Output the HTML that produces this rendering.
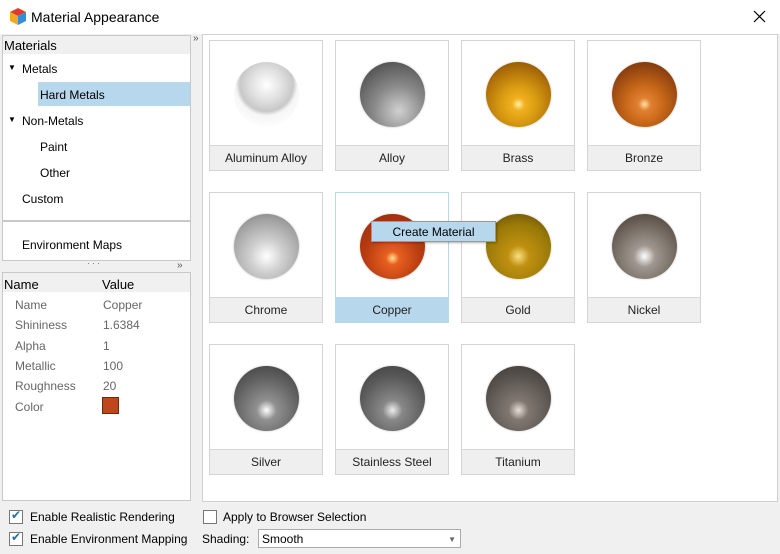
<!DOCTYPE html>
<html><head><style>
*{box-sizing:border-box;margin:0;padding:0}
body{width:780px;height:554px;background:#f0f0f0;font-family:"Liberation Sans",sans-serif;font-size:12px;color:#000;position:relative;overflow:hidden}
.a{position:absolute}
.title{left:0;top:0;width:780px;height:34px;background:#fff;}
.tile{position:absolute;width:114px;height:131px;border:1px solid #d4d4d4;background:#fff}
.tile .lbl{position:absolute;left:0;right:0;bottom:0;height:25px;background:#efefef;border-top:1px solid #d8d8d8;text-align:center;line-height:25px;font-size:12px;color:#222}
.tile .sp{position:absolute;left:24px;top:21px;width:65px;height:65px;border-radius:50%;box-shadow:0 0 2px rgba(0,0,0,.25)}
.prop{position:absolute;left:15px;color:#666;font-size:12px}
.val{position:absolute;left:103px;color:#666;font-size:12px}
.cb{position:absolute;width:14px;height:14px;border:1px solid #777;background:#fff}
</style></head><body>
<div class="a title">
 <svg class="a" style="left:9px;top:7px" width="18" height="19" viewBox="0 0 18 19">
  <path d="M9 1 L17 5 L9 9 L1 5Z" fill="#e03a2e"/>
  <path d="M1 5 L9 9 L9 18 L1 14Z" fill="#f5a623"/>
  <path d="M17 5 L9 9 L9 18 L17 14Z" fill="#2f8fd8"/>
 </svg>
 <div class="a" style="left:31px;top:9px;font-size:14px">Material Appearance</div>
 <svg class="a" style="left:753px;top:10px" width="13" height="13"><path d="M1 1L12 12M12 1L1 12" stroke="#000" stroke-width="1.2"/></svg>
</div>
<div class="a" style="left:2px;top:35px;width:189px;height:186px;background:#fff;border:1px solid #c8c8c8"></div>
<div class="a" style="left:3px;top:36px;width:187px;height:18px;background:#f0f0f0;font-size:13px;line-height:19px;padding-left:1px">Materials</div>
<div class="a" style="left:8px;top:63px;font-size:8px">▼</div>
<div class="a" style="left:22px;top:62px">Metals</div>
<div class="a" style="left:38px;top:82px;width:152px;height:24px;background:#b6d7ec"></div>
<div class="a" style="left:40px;top:88px">Hard Metals</div>
<div class="a" style="left:8px;top:115px;font-size:8px">▼</div>
<div class="a" style="left:22px;top:114px">Non-Metals</div>
<div class="a" style="left:40px;top:140px">Paint</div>
<div class="a" style="left:40px;top:166px">Other</div>
<div class="a" style="left:22px;top:192px">Custom</div>
<div class="a" style="left:2px;top:221px;width:189px;height:40px;background:#fff;border:1px solid #c8c8c8"></div>
<div class="a" style="left:22px;top:238px">Environment Maps</div>
<div class="a" style="left:87px;top:258px;font-size:9px;color:#777;letter-spacing:2px">···</div>
<div class="a" style="left:177px;top:260px;font-size:10px;color:#555">»</div>
<div class="a" style="left:193px;top:33px;font-size:10px;color:#555">»</div>
<div class="a" style="left:2px;top:272px;width:189px;height:229px;background:#fff;border:1px solid #c8c8c8"></div>
<div class="a" style="left:3px;top:273px;width:187px;height:19px;background:#f0f0f0;font-size:13px;line-height:24px;padding-left:1px">Name<span style="position:absolute;left:99px">Value</span></div>
<div class="prop" style="top:298px">Name</div><div class="val" style="top:298px">Copper</div>
<div class="prop" style="top:318px">Shininess</div><div class="val" style="top:318px">1.6384</div>
<div class="prop" style="top:339px">Alpha</div><div class="val" style="top:339px">1</div>
<div class="prop" style="top:359px">Metallic</div><div class="val" style="top:359px">100</div>
<div class="prop" style="top:379px">Roughness</div><div class="val" style="top:379px">20</div>
<div class="prop" style="top:400px">Color</div>
<div class="a" style="left:102px;top:397px;width:17px;height:17px;background:#c0461c;border:1px solid #6a2a10"></div>
<div class="a" style="left:202px;top:34px;width:576px;height:468px;background:#fff;border:1px solid #d0d0d0"></div>

<div class="tile" style="left:209px;top:40px"><div class="sp" style="box-shadow:none;background:radial-gradient(circle at 50% 35%,#fff 0%,#e0e0e0 30%,#c8c8c8 50%,#f6f6f6 58%,#fff 85%,#e6e6e6 100%)"></div><div class="lbl">Aluminum Alloy</div></div>
<div class="tile" style="left:335px;top:40px"><div class="sp" style="background:radial-gradient(circle at 60% 75%,#d0d0d0 0%,#8a8a8a 40%,#555 80%,#444 100%)"></div><div class="lbl">Alloy</div></div>
<div class="tile" style="left:461px;top:40px"><div class="sp" style="background:radial-gradient(circle at 50% 65%,#fff0a0 0%,#f0b020 12%,#d89a10 35%,#a86a08 70%,#6a4004 100%)"></div><div class="lbl">Brass</div></div>
<div class="tile" style="left:587px;top:40px"><div class="sp" style="background:radial-gradient(circle at 50% 65%,#ffe0a0 0%,#e08030 12%,#c86818 35%,#924410 70%,#5a2a08 100%)"></div><div class="lbl">Bronze</div></div>

<div class="tile" style="left:209px;top:192px"><div class="sp" style="background:radial-gradient(circle at 50% 65%,#fff 0%,#d0d0d0 30%,#a0a0a0 70%,#707070 100%)"></div><div class="lbl">Chrome</div></div>
<div class="tile" style="left:335px;top:192px;border-color:#b6d7ec"><div class="sp" style="background:radial-gradient(circle at 50% 68%,#ffe090 0%,#e86020 12%,#b83c10 50%,#8a2c0c 100%)"></div><div class="lbl" style="background:#b6d7ec;border-top-color:#b6d7ec">Copper</div></div>
<div class="tile" style="left:461px;top:192px"><div class="sp" style="background:radial-gradient(circle at 50% 65%,#f8e080 0%,#c09010 20%,#9a7a08 60%,#5a4404 100%)"></div><div class="lbl">Gold</div></div>
<div class="tile" style="left:587px;top:192px"><div class="sp" style="background:radial-gradient(circle at 50% 65%,#fff 0%,#a09890 20%,#6a6058 65%,#403830 100%)"></div><div class="lbl">Nickel</div></div>

<div class="tile" style="left:209px;top:344px"><div class="sp" style="background:radial-gradient(circle at 50% 68%,#fff 0%,#909090 18%,#606060 60%,#3a3a3a 100%)"></div><div class="lbl">Silver</div></div>
<div class="tile" style="left:335px;top:344px"><div class="sp" style="background:radial-gradient(circle at 50% 68%,#eee 0%,#888 18%,#5a5a5a 60%,#3a3a3a 100%)"></div><div class="lbl">Stainless Steel</div></div>
<div class="tile" style="left:461px;top:344px"><div class="sp" style="background:radial-gradient(circle at 50% 68%,#e8e0d8 0%,#807870 18%,#5a5450 60%,#3a3430 100%)"></div><div class="lbl">Titanium</div></div>

<div class="a" style="left:371px;top:221px;width:125px;height:21px;background:#b6d7ec;border:1px solid #999;box-shadow:1px 1px 2px rgba(0,0,0,.3);text-align:center;line-height:20px;font-size:12px">Create Material</div>

<div class="cb" style="left:9px;top:510px"></div><div class="a" style="left:11px;top:508px;color:#1f6fb0;font-size:12px">✔</div>
<div class="a" style="left:30px;top:510px">Enable Realistic Rendering</div>
<div class="cb" style="left:9px;top:532px"></div><div class="a" style="left:11px;top:530px;color:#1f6fb0;font-size:12px">✔</div>
<div class="a" style="left:30px;top:532px">Enable Environment Mapping</div>
<div class="cb" style="left:203px;top:510px"></div>
<div class="a" style="left:223px;top:510px">Apply to Browser Selection</div>
<div class="a" style="left:202px;top:532px">Shading:</div>
<div class="a" style="left:258px;top:529px;width:203px;height:19px;background:#fff;border:1px solid #aaa;padding-left:3px;line-height:19px">Smooth<span style="position:absolute;right:4px;top:0;font-size:8px;color:#666">▼</span></div>
</body></html>
